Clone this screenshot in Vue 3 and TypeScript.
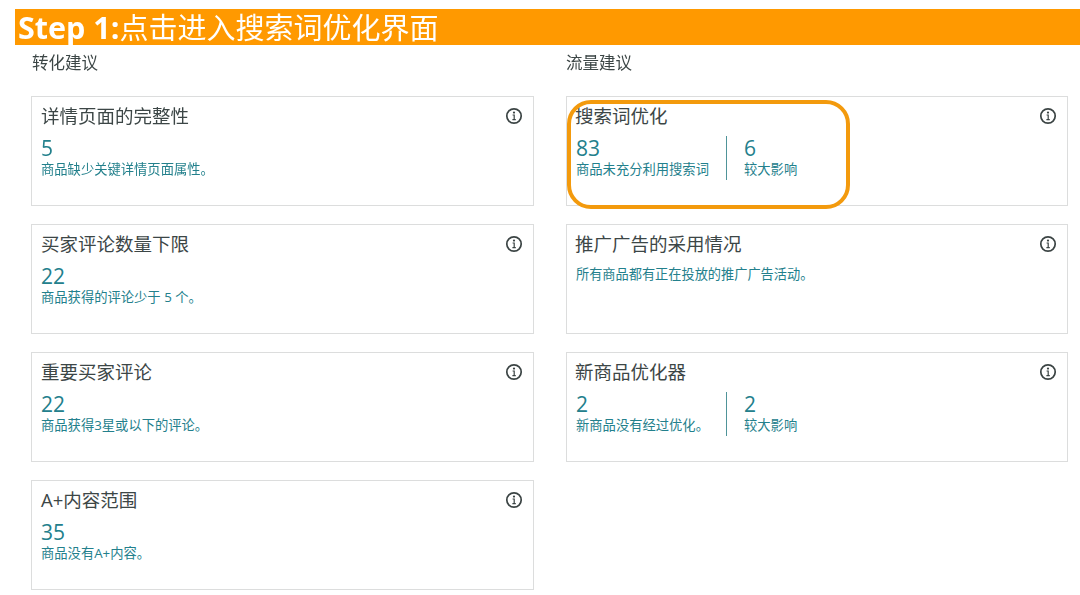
<script setup lang="ts">
interface Metric { value: string; label: string }
interface Card { title: string; metrics: Metric[]; note?: string; highlight?: boolean }

const left: Card[] = [
  { title: '详情页面的完整性', metrics: [{ value: '5', label: '商品缺少关键详情页面属性。' }] },
  { title: '买家评论数量下限', metrics: [{ value: '22', label: '商品获得的评论少于 5 个。' }] },
  { title: '重要买家评论', metrics: [{ value: '22', label: '商品获得3星或以下的评论。' }] },
  { title: 'A+内容范围', metrics: [{ value: '35', label: '商品没有A+内容。' }] },
]
const right: Card[] = [
  {
    title: '搜索词优化',
    highlight: true,
    metrics: [
      { value: '83', label: '商品未充分利用搜索词' },
      { value: '6', label: '较大影响' },
    ],
  },
  { title: '推广广告的采用情况', metrics: [], note: '所有商品都有正在投放的推广广告活动。' },
  {
    title: '新商品优化器',
    metrics: [
      { value: '2', label: '新商品没有经过优化。' },
      { value: '2', label: '较大影响' },
    ],
  },
]
const columns = [
  { heading: '转化建议', cards: left },
  { heading: '流量建议', cards: right },
]
</script>

<template>
  <div class="page">
    <h1 class="banner"><b>Step 1:</b>点击进入搜索词优化界面</h1>
    <div class="columns">
      <section v-for="col in columns" :key="col.heading" class="column">
        <h2 class="heading">{{ col.heading }}</h2>
        <article v-for="card in col.cards" :key="card.title" class="card">
          <h3 class="title">{{ card.title }}</h3>
          <svg class="info" width="18" height="18" viewBox="0 0 18 18" aria-hidden="true">
            <circle cx="9" cy="9" r="7.2" fill="none" stroke="#3b4444" stroke-width="1.7" />
            <circle cx="9" cy="5.6" r="1.1" fill="#3b4444" />
            <path d="M7.6 8h1.6v4.4M7.4 12.6h3.4" fill="none" stroke="#3b4444" stroke-width="1.2" />
          </svg>
          <p v-if="card.note" class="note">{{ card.note }}</p>
          <div v-else class="metrics">
            <div v-for="m in card.metrics" :key="m.label" class="metric">
              <div class="value">{{ m.value }}</div>
              <div class="label">{{ m.label }}</div>
            </div>
          </div>
          <div v-if="card.highlight" class="highlight"></div>
        </article>
      </section>
    </div>
  </div>
</template>

<style>
html, body { margin: 0; background: #fff; overflow: hidden; }
</style>

<style scoped>
.page {
  width: 1080px;
  height: 595px;
  padding-top: 9px;
  box-sizing: border-box;
  font-family: "Open Sans", "Noto Sans CJK SC", sans-serif;
  overflow: hidden;
  filter: blur(0.45px);
}
.banner {
  margin: 0 0 0 15px;
  height: 36px;
  padding-left: 3px;
  background: #ff9900;
  color: #fff;
  font-size: 29px;
  font-weight: 400;
  line-height: 36px;
  white-space: nowrap;
}
.banner b { font-weight: 700; font-size: 30.5px; }
.columns {
  display: grid;
  grid-template-columns: 503px 502px;
  column-gap: 32px;
  padding-left: 31px;
}
.heading {
  margin: 7px 0 0 1px;
  height: 44px;
  font-size: 16.5px;
  font-weight: 400;
  line-height: 22px;
  color: #3c4646;
}
.column + .column .heading { margin-left: 0; }
.card {
  position: relative;
  box-sizing: border-box;
  height: 110px;
  margin-bottom: 18px;
  padding: 7px 9px;
  border: 1px solid #dcdddd;
  background: #fff;
}
.column + .column .card { padding-left: 8px; }
.column + .column .metrics { margin-left: 1px; }
.column + .column .note { margin-left: 1px; }
.title {
  margin: 0;
  font-size: 18.5px;
  font-weight: 400;
  line-height: 24px;
  color: #3c4646;
}
.info { position: absolute; top: 10px; right: 10px; }
.metrics { display: flex; margin-top: 8px; }
.metric:first-child:not(:last-child) { width: 150px; box-sizing: border-box; }
.metric + .metric {
  padding-left: 17px;
  border-left: 1px solid #4f9499;
}
.value {
  font-size: 21px;
  line-height: 24px;
  color: #23808c;
}
.label {
  font-size: 13.3px;
  line-height: 18px;
  padding-bottom: 2px;
  color: #23808c;
}
.note {
  margin-top: 9px;
  margin-bottom: 0;
  margin-right: 0;
  font-size: 13.2px;
  line-height: 18px;
  color: #23808c;
}
.highlight {
  position: absolute;
  left: 0;
  top: 3px;
  width: 283px;
  height: 109px;
  box-sizing: border-box;
  border: 4px solid #f39a0d;
  border-radius: 24px;
}
</style>
